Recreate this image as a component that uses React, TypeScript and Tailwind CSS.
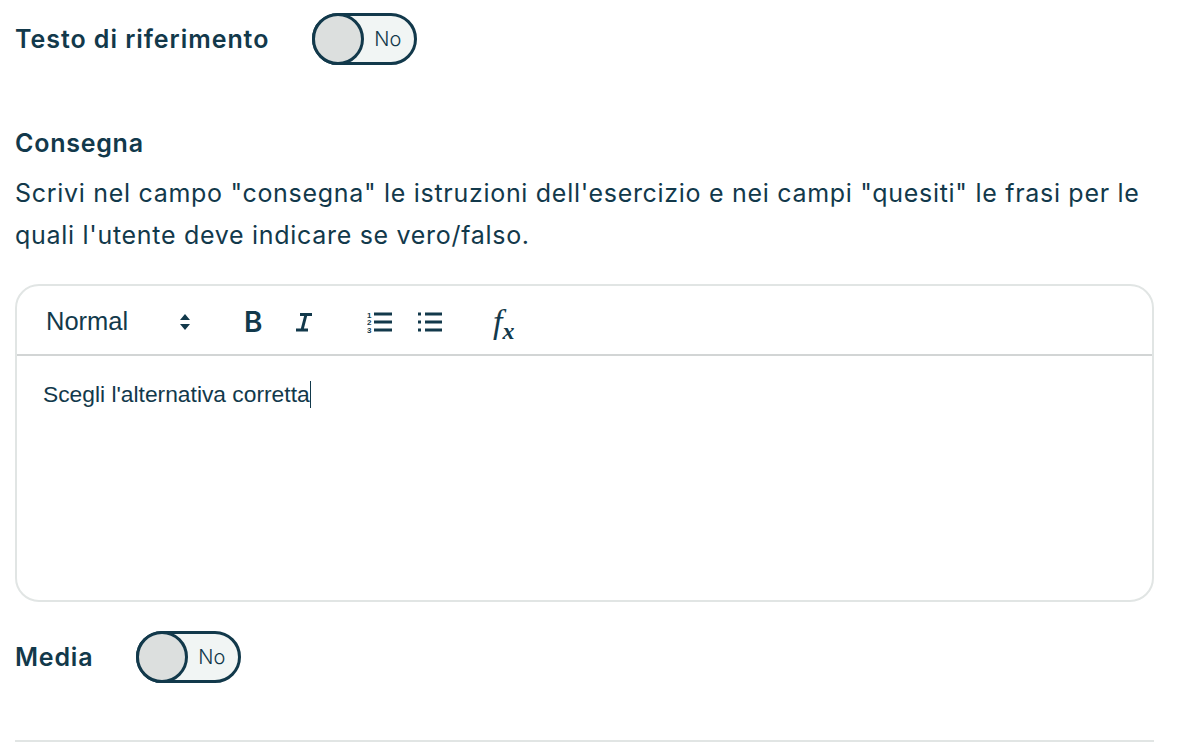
import * as React from 'react';

const Toggle = () => (
  <div className="relative flex h-[52px] w-[105px] items-center justify-end rounded-full border-[3px] border-[#12394b] bg-[#f1f5f4] pr-[13px]">
    <span className="font-['Inter',sans-serif] text-[20px] font-light text-[#12394b]">No</span>
    <div className="absolute left-[-3px] top-[-3px] h-[52px] w-[52px] rounded-full border-[3px] border-[#12394b] bg-[#dcdfde]" />
  </div>
);

const NumberedList = () => (
  <svg width="26" height="24" viewBox="0 0 26 24" className="text-[#12394b]">
    <text x="0" y="7.500" fontSize="8" fontWeight="700" fontFamily="Liberation Sans" fill="currentColor">1</text>
    <text x="0" y="15" fontSize="8" fontWeight="700" fontFamily="Liberation Sans" fill="currentColor">2</text>
    <text x="0" y="23" fontSize="8" fontWeight="700" fontFamily="Liberation Sans" fill="currentColor">3</text>
    <path d="M7 4h18M7 12h18M7 20h18" stroke="currentColor" strokeWidth="3" />
  </svg>
);

const BulletList = () => (
  <svg width="26" height="24" viewBox="0 0 26 24" className="text-[#12394b]">
    <path d="M8 4h17M8 12h17M8 20h17" stroke="currentColor" strokeWidth="3" />
    <path d="M1 4h3M1 12h3M1 20h3" stroke="currentColor" strokeWidth="3" />
  </svg>
);

const Editor = () => (
  <div className="mt-[28px] h-[318px] rounded-[24px] border-2 border-[#e1e5e4]">
    <div className="flex h-[70px] items-center border-b-2 border-[#d2d5d5] pl-[29px] pt-[3px] font-['Liberation_Sans',sans-serif] text-[#12394b]">
      <span className="w-[133px] text-[25.500px]">Normal</span>
      <svg width="12" height="20" viewBox="0 0 12 20" className="mr-[53px]">
        <path d="M6 2l5 6h-10zM6 18l-5-6h10z" fill="#12394b" />
      </svg>
      <span className="w-[51px] font-['Inter',sans-serif] text-[28px] font-semibold">B</span>
      <svg width="18" height="20" viewBox="0 0 18 20" className="mr-[54px]">
        <path d="M5 2.500h12M1 18h12M11 2.500L7 18" stroke="#12394b" strokeWidth="3" fill="none" />
      </svg>
      <div className="mr-[24px]"><NumberedList /></div>
      <BulletList />
      <span className="ml-[50px] font-['Liberation_Serif',serif] text-[34px] italic leading-none">f<sub className="text-[24px] font-bold">x</sub></span>
    </div>
    <div className="px-[26px] pt-[19px] font-['Liberation_Sans',sans-serif] text-[22.800px] leading-[28px] text-[#12394b]">
      Scegli l'alternativa corretta<span className="inline-block h-[27px] w-[1.500px] translate-y-[6px] bg-[#12394b]" />
    </div>
  </div>
);

export default function App() {
  return (
    <div className="h-[745px] overflow-hidden bg-white pl-[15px] pr-[46px] pt-[13px] font-['Inter',sans-serif] text-[#12394b]">
      <div className="flex items-center gap-[43px]">
        <span className="pt-[2px] text-[25px] font-semibold tracking-[0.950px]">Testo di riferimento</span>
        <Toggle />
      </div>

      <h2 className="mt-[60px] text-[25px] font-semibold leading-[36px] tracking-[0.750px]">Consegna</h2>
      <p className="mt-[11px] text-[25px] leading-[42px] tracking-[0.700px]">
        Scrivi nel campo "consegna" le istruzioni dell'esercizio e nei campi "quesiti" le frasi per le quali l'utente deve indicare se vero/falso.
      </p>

      <Editor />

      <div className="mt-[29px] flex items-center gap-[43px]">
        <span className="pt-[2px] text-[25px] font-semibold tracking-[0.800px]">Media</span>
        <Toggle />
      </div>

      <hr className="mt-[57px] border-t-2 border-[#e1e5e4]" />
    </div>
  );
}
